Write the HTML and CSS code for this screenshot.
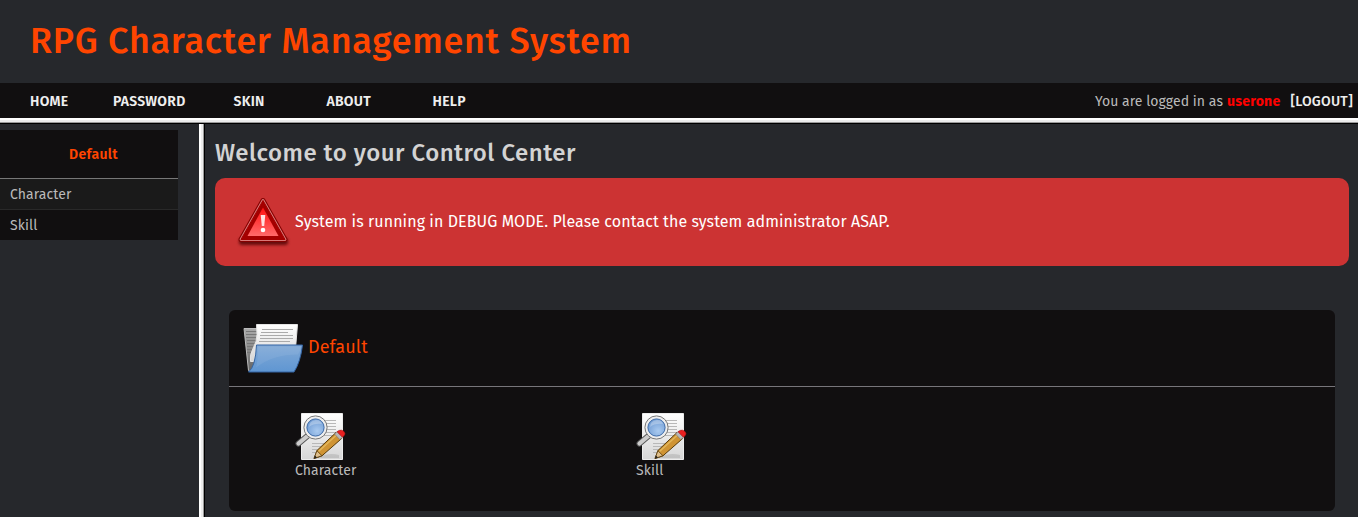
FILE: index.html
```html
<!DOCTYPE html>
<html lang="en">
<head>
<meta charset="utf-8">
<title>RPG Character Management System</title>
<link rel="stylesheet" href="styles.css">
</head>
<body>
<svg width="0" height="0" class="defs" aria-hidden="true">
  <defs>
    <linearGradient id="paper" x1="0" y1="0" x2="0" y2="1"><stop offset="0" stop-color="#fff"/><stop offset="1" stop-color="#d6d6d6"/></linearGradient>
    <linearGradient id="blue" x1="0" y1="0" x2="0" y2="1"><stop offset="0" stop-color="#81a9d6"/><stop offset="1" stop-color="#5f96d2"/></linearGradient>
    <linearGradient id="back" x1="0" y1="0" x2="0" y2="1"><stop offset="0" stop-color="#aaa"/><stop offset="1" stop-color="#666"/></linearGradient>
    <linearGradient id="danger" x1="0" y1="0" x2="0" y2="1"><stop offset="0" stop-color="#ff1010"/><stop offset="1" stop-color="#ff6a6a"/></linearGradient>
    <radialGradient id="lens" cx=".6" cy=".7" r=".8"><stop offset="0" stop-color="#a9caf0"/><stop offset="1" stop-color="#6996d0"/></radialGradient>
    <filter id="soft" x="-20%" y="-100%" width="140%" height="300%"><feGaussianBlur stdDeviation="1.4"/></filter>
  </defs>
  <symbol id="document" viewBox="0 0 52 50">
    <path d="M6.500 1.500h41v46h-41z" fill="url(#paper)" stroke="#ececec"/>
    <path d="M30 8.500h11M31 11.500h10M31 14.500h10M30 17.500h11M28 20.500h13M25 23.500h16M17 31.500h24M17 34.500h15M17 37.500h12M17 40.500h9" stroke="#b8b8b8"/>
    <path d="M22 45q12-5 22-2v3H22z" fill="#999" opacity=".35"/>
    <path d="M13 23.500 3.500 31.500" stroke="#555" stroke-width="6" stroke-linecap="round"/>
    <path d="M13 23.500 3.500 31.500" stroke="#ccc" stroke-width="4.200" stroke-linecap="round"/>
    <circle cx="20.500" cy="15.500" r="11.600" fill="#eee" stroke="#777"/>
    <circle cx="20.500" cy="15.500" r="8.600" fill="url(#lens)" stroke="#3a69a8"/>
    <path d="M14 15q0-6 7-7 5 0 6 4-8-1-13 3z" fill="#fff" opacity=".28"/>
    <path d="m19 46.500 3.200-8.200L41 20.500l5.700 6L27 43.800z" fill="#cf9434" stroke="#593b08"/>
    <path d="m23.500 39.500 18-16.500" stroke="#e2b75c" stroke-width="1.500"/>
    <path d="m19 46.500 2.900-7.800 5 5z" fill="#dfbf8c" stroke="#593b08" stroke-width=".8"/>
    <path d="m19 46.500 1-3 2 2z" fill="#222"/>
    <path d="m39.500 22 3-2.600 5.300 5.600-3 2.600z" fill="#b8b8b8" stroke="#777" stroke-width=".6"/>
    <path d="m42 19.800 2-1.400q3-1 5 1.200 2 2.300 0 4.200l-1.600 1.400z" fill="#e92020" stroke="#a91414" stroke-width=".6"/>
  </symbol>
</svg>

<header class="banner"><h1>RPG Character Management System</h1></header>

<nav class="topbar">
  <ul class="menu">
    <li class="m-home"><a>HOME</a></li>
    <li class="m-password"><a>PASSWORD</a></li>
    <li class="m-skin"><a>SKIN</a></li>
    <li class="m-about"><a>ABOUT</a></li>
    <li class="m-help"><a>HELP</a></li>
  </ul>
  <div class="session"><span class="who">You are logged in as</span><b class="user">userone</b><a class="logout">[LOGOUT]</a></div>
</nav>

<div class="page">
  <aside class="sidebar">
    <section class="side-menu">
      <h3>Default</h3>
      <a class="side-item hover">Character</a>
      <a class="side-item">Skill</a>
    </section>
  </aside>
  <main class="content">
    <h2>Welcome to your Control Center</h2>
    <div class="alert">
      <svg class="alert-icon" viewBox="0 0 56 54">
        <rect x="4" y="43" width="49" height="7" rx="3" fill="#430000" filter="url(#soft)" opacity=".75"/>
        <path d="M28 5.500 50 44.500H6z" fill="#a40000" stroke="#850000" stroke-width="5" stroke-linejoin="round"/>
        <path d="M28 5.500 50 44.500H6z" fill="#a40000" stroke="#d87878" stroke-width="2.800" stroke-linejoin="round"/>
        <path d="M28 5.500 50 44.500H6z" fill="#a40000" stroke="#a40000" stroke-width="1" stroke-linejoin="round"/>
        <path d="M28 12.500 43.500 41h-31z" fill="url(#danger)"/>
        <path d="M25.700 20h4.600l-1.100 11h-2.400z" fill="#ffe0e0"/>
        <circle cx="28" cy="35" r="2.300" fill="#fff"/>
      </svg>
      <p>System is running in DEBUG MODE. Please contact the system administrator ASAP.</p>
    </div>
    <section class="panel">
      <div class="panel-head">
        <svg class="folder" viewBox="0 0 60 50">
          <path d="M1 5.500h16v42H5.500z" fill="url(#back)" stroke="#bbb"/>
          <path d="M3 8.500h12M3 11.500h12M3 14.500h11M4 17.500h9M4 20.500h8M4 23.500h7M4 26.500h6M4 29.500h5" stroke="#777"/>
          <path d="M13.500 1.500h41l-2 24-42 13H7.500q-1-7 2.500-13 4-7 4-14z" fill="url(#paper)" stroke="#e4e4e4"/>
          <path d="M19 6.500h31M18 9.500h27M17 12.500h33M17 15.500h33M16 18.500h31" stroke="#aaa"/>
          <path d="M13.500 22h46q-2 17-8.500 27H5.500q7-5 8-27z" fill="url(#blue)" stroke="#3465a4"/>
          <path d="M15 23.500h43q-1 5-3 8-25 0-42 13 2-6 2-21z" fill="#fff" opacity=".07"/>
        </svg>
        <h3>Default</h3>
      </div>
      <div class="panel-body">
        <a class="tile"><svg class="tile-icon"><use href="#document"/></svg><span>Character</span></a>
        <a class="tile"><svg class="tile-icon"><use href="#document"/></svg><span>Skill</span></a>
      </div>
    </section>
  </main>
</div>
</body>
</html>
```
FILE: styles.css
```css
* { box-sizing: border-box; }
html, body { height: 100%; }
body {
  margin: 0;
  display: flex;
  flex-direction: column;
  overflow: hidden;
  background: #26282c;
  color: #bbb;
  font-family: "Fira Sans", "Noto Sans", sans-serif;
  font-size: 14px;
  letter-spacing: .1px;
  white-space: nowrap;
}
h1, h2, h3, p, ul { margin: 0; padding: 0; }
.defs { position: absolute; }
.banner { height: 83px; flex: none; padding: 16px 30px 0; }
h1 { color: #ff4500; font-size: 36px; font-weight: 500; line-height: 50px; letter-spacing: .71px; }
.topbar {
  height: 41px;
  flex: none;
  display: flex;
  justify-content: space-between;
  background: #110f10;
  border-bottom: 1px solid #000;
  box-shadow: inset 0 -1px #9a9a9a, inset 0 -3px #ececec, inset 0 -5px #fff;
  line-height: 37px;
}
.menu { display: flex; list-style: none; padding-left: 30px; color: #eee; font-weight: 600; letter-spacing: .27px; }
.m-home { width: 83px; }
.m-password { width: 120.500px; }
.m-skin { width: 93px; }
.m-about { width: 106px; }
.session { display: flex; padding-right: 5px; }
.who { letter-spacing: .05px; }
.user { color: #f00; margin: 0 10px 0 4px; letter-spacing: .25px; }
.logout { color: #eee; font-weight: 500; letter-spacing: .25px; }
.page { flex: 1; display: flex; min-height: 0; }
.sidebar {
  width: 205px;
  padding-top: 6px;
  border-right: 1px solid #000;
  box-shadow: inset -1px 0 #9a9a9a, inset -3px 0 #ececec, inset -5px 0 #fff;
}
.side-menu { width: 178px; background: #110f10; }
.side-menu h3 { height: 49px; line-height: 49px; padding-left: 69px; border-bottom: 1px solid #777; color: #ff4500; font-size: 14px; font-weight: 600; letter-spacing: .35px; }
.side-item { display: block; height: 30px; line-height: 31px; padding-left: 10px; }
.side-item.hover { height: 31px; background: #1a1a1a; border-bottom: 1px solid #292929; }
.content { flex: 1; padding: 9px 9px 0 10px; }
h2 { height: 45px; line-height: 41px; font-size: 24px; font-weight: 500; letter-spacing: .5px; color: #d3d3d3; }
.alert { display: flex; height: 88px; padding: 17px 20px; border-radius: 10px; background: #c33; color: #fff; }
.alert-icon { width: 56px; height: 54px; }
.alert p { padding-left: 4px; line-height: 53px; font-size: 16px; letter-spacing: .08px; }
.panel { margin: 44px 14px 0; height: 201px; border-radius: 6px; background: #110f10; }
.panel-head { display: flex; height: 77px; padding: 13px 0 0 14px; border-bottom: 1px solid #77757a; }
.folder { width: 60px; height: 50px; }
.panel-head h3 { color: #ff4500; font-size: 18px; font-weight: 400; line-height: 48px; letter-spacing: .1px; padding-left: 5px; }
.panel-body { display: grid; grid-template-columns: 341px 341px; padding: 25px 0 0 66px; }
.tile { display: flex; flex-direction: column; align-items: flex-start; line-height: 18px; }
.tile-icon { width: 52px; height: 50px; }
```
